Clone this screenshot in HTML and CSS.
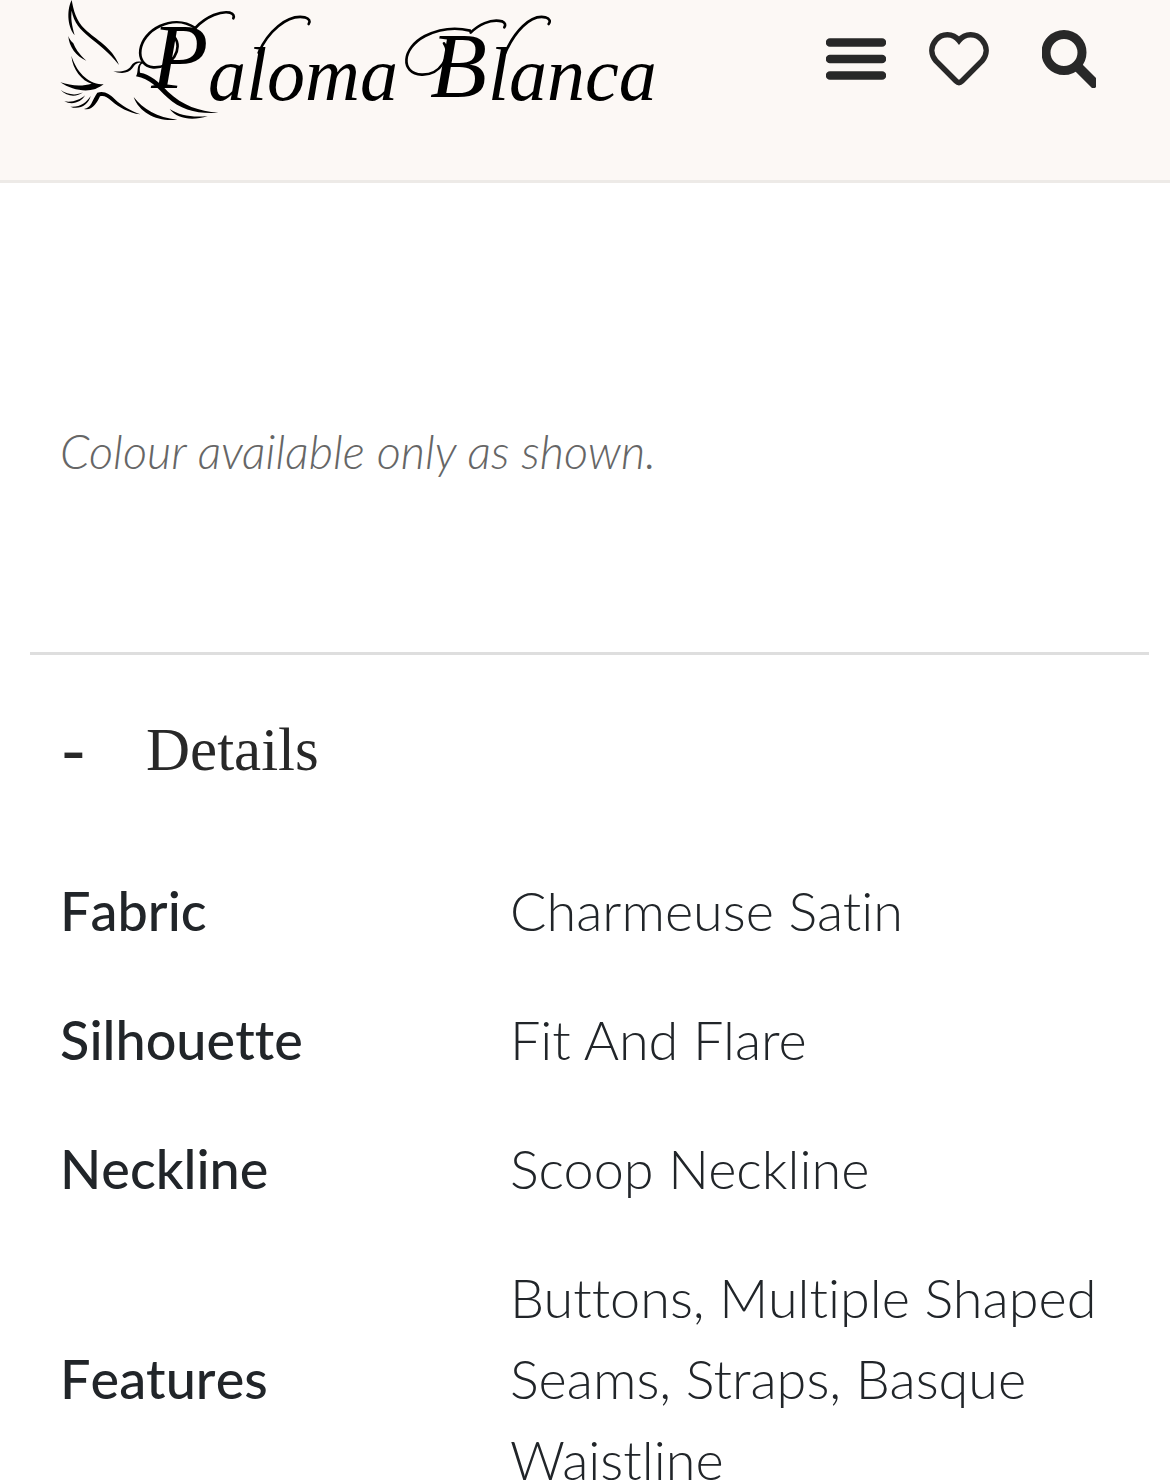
FILE: index.html
```html
<!DOCTYPE html>
<html lang="en">
<head>
<meta charset="utf-8">
<meta name="viewport" content="width=device-width, initial-scale=1">
<title>Paloma Blanca</title>
<link rel="stylesheet" href="styles.css">
</head>
<body>
<header class="site-header">
  <a class="logo" href="#">
    <svg viewBox="30 0 1800 372" role="img" aria-label="Paloma Blanca">
      <!-- Dove -->
      <g>
        <path d="M65 0C52 25 49 75 74 106C65 75 62 55 65 32C78 105 145 115 207 195C185 140 138 120 105 88C78 63 70 28 65 0Z"/>
        <path d="M55 108C57 140 78 169 109 182C84 160 76 144 70 130C62 122 58 117 55 108Z"/>
        <path d="M64 167C68 210 96 242 125 251C95 260 61 257 31 247C62 269 105 277 136 267C146 263 154 258 161 253C121 253 83 225 64 167Z"/>
        <path d="M32 270C54 285 78 287 99 277C81 291 52 292 32 270ZM43 304C67 308 91 300 105 286C95 306 67 317 43 304ZM61 320C88 323 109 309 122 288C116 315 87 331 61 320Z"/>
        <path d="M102 327C125 323 125 302 142 278C165 272 178 283 193 296C216 318 243 332 271 343C235 338 207 322 184 302C171 290 160 285 150 289C141 308 128 333 102 327Z"/>
        <path d="M190 214C215 216 234 213 243 198C252 183 265 180 289 190C272 187 268 196 270 218C300 222 328 247 354 275C398 317 447 333 505 338C447 343 393 330 353 293C319 263 301 236 258 229C267 213 258 200 272 188C260 188 255 193 247 205C236 221 212 222 190 214Z"/>
        <path d="M251 291C278 326 322 353 382 359C325 366 269 341 251 291ZM359 327C389 347 429 353 473 348C428 363 381 357 359 327Z"/>
      </g>
      <!-- Ornamental flourishes -->
      <g class="flourish">
        <path d="M372 110C402 145 365 205 310 202C250 195 260 110 330 78C360 64 400 60 436 84"/>
        <path d="M436 84C470 48 515 32 540 38C551 42 553 48 550 55"/>
        <path d="M1182 130C1208 165 1170 226 1115 224C1050 220 1055 145 1125 108C1170 86 1220 82 1260 92"/>
        <path d="M1262 98C1285 75 1320 56 1356 64C1367 69 1367 76 1363 82"/>
        <path d="M626 158C652 98 710 42 764 52C778 56 782 64 776 72"/>
        <path d="M1366 158C1392 98 1440 42 1486 52C1500 56 1502 64 1496 72"/>
      </g>
      <text class="wordmark" y="300"><tspan class="initial" x="304" y="265">P</tspan><tspan x="474" y="300">aloma </tspan><tspan class="initial" x="1140" y="290">B</tspan><tspan x="1314" y="300">lanca</tspan></text>
    </svg>
  </a>
  <nav class="tools" aria-label="Main">
    <button class="tool" type="button" aria-label="Menu">
      <svg width="60" height="42" viewBox="0 0 60 42"><path d="M4 4.500H56M4 21H56M4 37.500H56" fill="none" stroke="currentColor" stroke-width="8.500" stroke-linecap="round"/></svg>
    </button>
    <a class="tool" href="#" aria-label="Wishlist">
      <svg width="60" height="54" viewBox="0 0 60 54"><path d="M30 8.500C24 1 13 1 7 8C1 15 2 23 7 29L27 49Q30 52 33 49L53 29C58 23 59 15 53 8C47 1 36 1 30 8.500Z" fill="none" stroke="currentColor" stroke-width="5.500"/></svg>
    </a>
    <button class="tool search" type="button" aria-label="Search">
      <svg width="54" height="58" viewBox="0 0 54 58"><g fill="none" stroke="currentColor"><circle cx="22" cy="22.500" r="18" stroke-width="9"/><path d="M36 37L55 56" stroke-width="10"/></g></svg>
    </button>
  </nav>
</header>
<main class="product">
  <p class="note">Colour available only as shown.</p>
  <section class="details">
    <h2 class="details-title">
      <button class="toggle" type="button" aria-expanded="true" aria-controls="specs"><span class="sign">-</span>Details</button>
    </h2>
    <table class="specs" id="specs">
      <tr><th scope="row">Fabric</th><td>Charmeuse Satin</td></tr>
      <tr><th scope="row">Silhouette</th><td>Fit And Flare</td></tr>
      <tr><th scope="row">Neckline</th><td>Scoop Neckline</td></tr>
      <tr><th scope="row">Features</th><td>Buttons, Multiple Shaped Seams, Straps, Basque Waistline</td></tr>
    </table>
  </section>
</main>
</body>
</html>
```
FILE: styles.css
```css
* {
  box-sizing: border-box;
}

body {
  margin: 0;
  height: 100vh;
  overflow: hidden;
  background: #fff;
  color: #212529;
  font-family: Lato, sans-serif;
  font-size: 54px;
  font-variant-ligatures: none;
  line-height: 81px;
}

.site-header {
  display: flex;
  justify-content: space-between;
  align-items: flex-start;
  padding: 0 74px 56px 60px;
  background: #fcf8f5;
  border-bottom: 3px solid #edeae7;
}

.logo {
  width: 600px;
  color: #000;
}

.logo svg,
.tool svg {
  display: block;
}

.flourish {
  fill: none;
  stroke: #000;
  stroke-width: 8px;
  stroke-linecap: round;
}

.wordmark {
  font-family: "Liberation Serif", serif;
  font-style: italic;
  font-size: 228px;
}

.initial {
  font-size: 280px;
}

.tools {
  display: flex;
  align-items: center;
  gap: 43px;
  padding-top: 30px;
}

.tool {
  padding: 0;
  border: 0;
  background: none;
  color: #282828;
}

.search {
  margin-left: 10px;
}

.note {
  margin: 0;
  padding: 232px 60px 165px;
  color: #666;
  font-size: 47px;
  font-style: italic;
  font-weight: 300;
  line-height: 72px;
}

.details {
  margin: 0 21px 0 30px;
  padding: 54px 30px 0;
  border-top: 3px solid #dedede;
}

.details-title {
  margin: 0 0 56px;
}

.toggle {
  display: flex;
  align-items: center;
  padding: 0;
  border: 0;
  background: none;
  color: #282828;
  font: 400 61px/81px "Liberation Serif", serif;
}

.sign {
  width: 86px;
  font-family: Lato, sans-serif;
  font-size: 72px;
  text-align: left;
}

.specs {
  width: 100%;
  border-collapse: collapse;
}

.specs th,
.specs td {
  padding: 24px 0;
  text-align: left;
  vertical-align: middle;
}

.specs th {
  width: 450px;
  font-kerning: none;
  font-weight: 500;
}

.specs td {
  font-weight: 300;
}
```
